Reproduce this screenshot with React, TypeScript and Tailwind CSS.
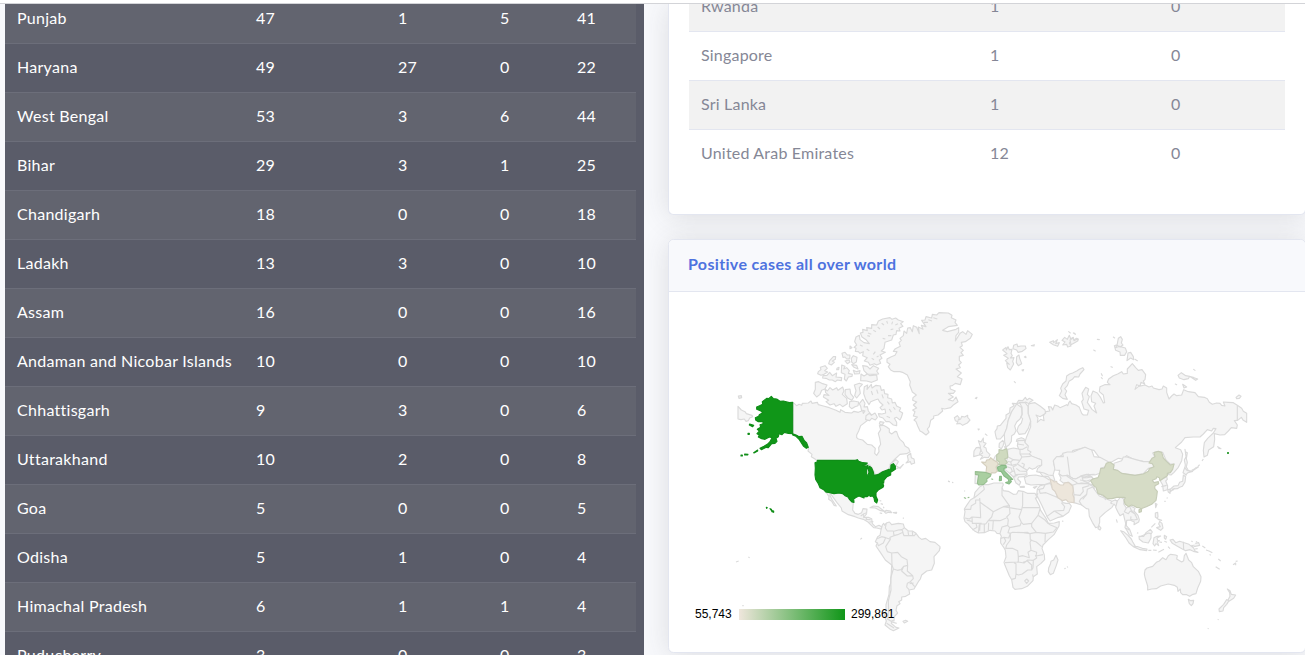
import React from "react";

type StateRow = [string, string, string, string, string];
type CountryRow = [string, string, string];

const states: StateRow[] = [
  ["Punjab", "47", "1", "5", "41"],
  ["Haryana", "49", "27", "0", "22"],
  ["West Bengal", "53", "3", "6", "44"],
  ["Bihar", "29", "3", "1", "25"],
  ["Chandigarh", "18", "0", "0", "18"],
  ["Ladakh", "13", "3", "0", "10"],
  ["Assam", "16", "0", "0", "16"],
  ["Andaman and Nicobar Islands", "10", "0", "0", "10"],
  ["Chhattisgarh", "9", "3", "0", "6"],
  ["Uttarakhand", "10", "2", "0", "8"],
  ["Goa", "5", "0", "0", "5"],
  ["Odisha", "5", "1", "0", "4"],
  ["Himachal Pradesh", "6", "1", "1", "4"],
  ["Puducherry", "3", "0", "0", "3"],
];

const countries: CountryRow[] = [
  ["Rwanda", "1", "0"],
  ["Singapore", "1", "0"],
  ["Sri Lanka", "1", "0"],
  ["United Arab Emirates", "12", "0"],
];

function StatesTable() {
  return (
    <div className="w-[639px] shrink-0 overflow-hidden bg-[#5a5c69] pr-2 text-white">
      <div className="-mt-[10px]">
        {states.map((r, i) => (
          <div
            key={r[0]}
            className={
              "grid h-[49px] grid-cols-[239px_142px_102px_77px_1fr] items-center border-t border-[#6c6e7a] pb-0.5 pl-3 " +
              (i % 2 === 0 ? "bg-[#62646f]" : "")
            }
          >
            {r.map((c, j) => (
              <span key={j} className={j === 0 ? "whitespace-nowrap tracking-[0.28px]" : "tracking-[0.1px]"}>
                {c}
              </span>
            ))}
          </div>
        ))}
      </div>
    </div>
  );
}

function CountriesCard() {
  return (
    <section className="h-[211px] shrink-0 overflow-visible rounded-b-[5.6px] border border-t-0 border-[#e3e6f0] bg-white px-5 text-[#858796] shadow-[0_2px_28px_0_rgba(58,59,69,0.15)]">
      <div className="h-[175px] overflow-hidden">
        <div className="-mt-[22px]">
          {countries.map((r, i) => (
            <div
              key={r[0]}
              className={
                "grid h-[49px] grid-cols-[289px_181px_1fr] items-center border-t border-[#e3e6f0] pb-0.5 pl-3 " +
                (i % 2 === 0 ? "bg-[#f2f2f2]" : "")
              }
            >
              {r.map((c, j) => (
                <span key={j} className={j === 0 ? "whitespace-nowrap tracking-[0.2px]" : "tracking-[0.1px]"}>
                  {c}
                </span>
              ))}
            </div>
          ))}
        </div>
      </div>
    </section>
  );
}

const northAmerica = [
  // Canada
  "M189,292L200,302L207,298L215,301L217,295L235,294L243,288L246,295L262,292L265,299L280,303L298,308L318,316L330,322L332,314L345,322L365,324L372,319L385,322L395,318L392,304L388,296L398,283L405,295L402,306L412,305L415,318L425,330L420,340L405,352L392,362L386,378L380,390L380,398L385,402L398,405L412,418L425,420L436,430L434,445L440,451L447,440L446,428L452,418L449,400L445,385L452,374L448,362L460,361L470,366L478,372L478,382L485,387L496,379L500,380L505,395L510,403L520,412L525,423L536,430L540,440L530,446L510,448L495,462L480,478L498,464L505,470L498,482L510,490L520,478L512,486L497,492L492,480L480,482L476,493L455,500L437,510L432,500L420,480L400,477L380,467L262,467L255,462L244,455L246,448L234,438L236,430L222,410L212,400L200,392L189,388Z",
  // Newfoundland
  "M532,452L542,445L544,458L552,462L554,474L544,478L541,470L528,474L535,466Z",
  // Ellesmere and Axel Heiberg
  "M458,42L480,38L486,43L497,39L505,45L520,50L512,56L519,64L507,70L510,78L500,77L498,88L490,90L485,105L476,108L465,112L462,130L454,138L466,142L450,150L456,160L448,165L452,175L440,180L433,176L420,181L415,172L403,168L412,158L398,152L400,140L390,145L385,140L376,139L378,130L372,127L380,120L374,110L378,96L388,91L390,104L402,113L418,116L408,104L396,96L391,84L399,82L398,73L412,77L410,68L425,70L425,59L440,60L445,48Z",
  "M455,55L462,60M470,48L473,56M488,50L485,58M504,56L496,60M443,66L450,72M430,76L438,80M414,84L424,88M412,92L420,94M490,72L482,74M484,92L474,92M466,102L458,100M410,132L418,137M436,140L430,148M425,160L432,164M440,156L446,153M390,120L398,124",
  "M398,182L412,184L420,192L430,182L446,190L440,198L446,207L430,208L412,207L402,197Z",
  "M393,207L402,213L412,207L420,212L440,210L442,225L425,232L410,228L392,227Z",
  "M370,196L380,200L390,197L388,206L374,207Z",
  // Banks and Victoria
  "M256,232L266,230L278,236L291,240L285,252L275,256L270,268L260,276L251,265L256,253Z",
  "M285,252L292,258L300,248L308,255L320,248L324,256L338,246L342,258L337,268L350,280L352,296L338,305L330,298L318,304L312,296L300,300L288,290L296,286L280,276L282,269L297,271L287,263Z",
  "M346,254L360,252L362,266L371,277L365,286L354,280L345,268Z",
  "M373,240L388,235L397,238L388,248L391,265L380,279L374,272L378,257Z",
  "M359,290L371,288L386,291L384,302L375,305L365,311L358,305Z",
  // Queen Elizabeth islands
  "M265,200L273,194L271,187L285,182L292,190L284,197L293,201L282,208L273,211L263,206Z",
  "M279,212L291,211L299,202L307,212L320,204L318,216L335,218L334,227L322,225L316,230L307,225L298,225L288,220L278,219Z",
  "M299,167L310,155L317,155L316,163L307,168L313,172L304,180L296,176Z",
  "M336,145L345,142L352,150L360,150L359,161L350,162L345,156L339,157Z",
  "M364,160L370,152L381,157L379,171L370,176L365,171Z",
  "M335,180L345,184L341,192L350,188L358,197L355,205L367,208L366,214L355,216L349,228L343,222L345,208L334,203Z",
  "M321,190L327,187L326,194L320,194ZM345,168L357,165L360,171L352,176ZM360,123L366,128L360,131ZM365,179L380,181L384,192L372,187Z",
  // Baffin
  "M403,245L413,240L411,253L424,238L426,249L438,241L451,243L454,256L462,254L464,266L474,268L473,278L485,282L487,294L495,292L500,303L512,309L508,318L518,324L514,337L510,345L500,337L493,340L500,352L500,362L490,360L478,350L468,350L459,339L448,335L445,326L456,327L467,324L465,312L456,315L450,308L459,300L449,291L444,282L435,285L422,290L417,299L407,283L401,266Z",
  "M424,258L428,270M440,254L444,266M456,268L460,280M472,290L478,298M490,306L496,314M478,312L484,322M470,334L480,338",
  "M408,332L418,325L424,331L435,324L442,337L436,345L425,340L419,347L407,344ZM450,350L462,352L456,360L448,357ZM398,316L405,318L400,325Z",
  // Chukotka across the date line
  "M24,304L34,315L45,320L49,326L66,331L68,335L59,339L55,347L48,349L43,342L33,344L24,342Z",
  "M25,273L34,272L35,278L27,280Z",
];

const alaska = [
  "M188,292L178,293L160,288L150,289L140,282L130,281L124,274L116,281L110,280L97,290L98,298L89,302L80,306L80,313L91,317L98,323L88,329L86,334L76,338L77,345L85,350L99,350L99,356L90,359L92,367L82,373L88,378L81,386L88,390L85,396L95,401L105,403L118,396L126,398L120,410L112,418L102,424L90,430L94,434L109,427L115,428L125,416L135,415L141,409L138,400L145,395L147,386L156,389L163,382L175,385L188,386L200,391L207,395L216,394L223,407L230,414L235,427L229,430L220,423L208,404L198,394L188,390Z",
  "M71,443L83,435L83,438L72,444ZM44,447L54,448L53,450L44,450ZM33,450L37,450L37,453L33,453ZM59,357L71,361L68,365L58,360ZM54,385L58,385L58,388L54,388Z",
];

const northAtlantic = [
  // Greenland
  "M0,100L10,92L12,78L20,85L23,69L31,68L37,80L40,62L50,67L58,86L55,66L69,73L64,61L78,65L65,46L75,45L78,35L95,39L97,28L110,30L117,23L145,24L156,31L154,38L168,45L165,52L172,61L145,65L128,76L142,80L168,73L176,68L176,82L168,92L166,108L180,85L188,80L198,88L203,77L217,88L211,100L196,110L184,112L187,122L180,127L190,136L183,143L190,151L178,154L178,166L184,173L176,180L181,188L168,192L184,204L172,215L186,222L181,239L166,235L157,242L150,243L151,252L166,258L160,265L145,265L160,276L145,284L159,288L168,276L174,290L161,299L152,308L134,312L125,310L128,318L114,330L101,333L101,340L92,346L88,365L82,372L87,382L78,390L66,381L60,378L53,363L48,350L42,345L52,336L40,333L45,320L38,315L50,309L40,300L50,291L38,286L39,278L49,270L37,261L29,240L31,230L22,210L10,203L0,200L-18,200L-28,195L-35,185L-30,178L-39,172L-39,162L-26,155L-15,151L-9,140L-20,139L-14,131L1,124L-3,113L4,106Z",
  "M85,44L96,48M100,38L112,42M72,52L84,52",
  // Iceland
  "M163,338L172,332L178,339L174,346L182,342L185,334L194,336L203,331L203,337L210,345L202,354L188,361L180,355L170,357L174,350L166,347Z",
  // Svalbard
  "M308,135L318,127L319,135L324,125L328,134L336,133L333,145L337,152L331,159L342,158L338,169L341,177L331,195L323,188L320,174L328,178L316,167L325,160L311,151L321,146Z",
  "M341,121L351,117L353,125L363,123L376,123L378,131L367,139L354,142L350,135L339,131Z",
  "M350,155L357,150L359,160L365,176L355,182L349,173ZM373,156L377,154L378,158ZM394,122L403,119L402,123ZM366,195L371,194L369,198ZM343,230L346,233ZM226,280L231,277L229,281ZM234,372L238,372L236,375Z",
  // Franz Josef Land
  "M449,112L460,107L461,113L472,104L467,116L478,113L473,124L460,119ZM486,106L494,97L502,103L508,91L512,101L520,97L519,106L530,100L535,103L522,112L513,108L508,114L513,123L503,126L500,118L488,120L495,111ZM506,80L511,84ZM522,84L526,88Z",
  // Novaya Zemlya
  "M478,272L485,258L482,250L488,237L498,228L500,213L509,207L518,204L530,198L538,193L548,188L552,194L540,207L536,216L524,215L517,223L507,229L502,242L494,251L500,258L495,269L502,283L488,280Z",
  // Britain and Ireland
  "M235,407L243,411L250,399L250,412L258,415L251,425L258,429L260,439L270,449L265,458L253,457L241,463L248,453L239,449L248,444L242,435L241,424Z",
  "M222,438L229,428L238,427L243,434L238,450L221,455ZM256,387L261,391Z",
];

const scandinavia = [
  "M285,380L291,371L292,363L301,361L310,350L318,340L318,330L329,323L330,309L342,302L337,295L350,296L356,286L368,287L376,277L381,285L388,280L399,286L390,291L387,296L377,291L370,298L358,293L350,299L344,311L335,320L325,345L320,370L315,386L307,395L301,402L290,402L287,391Z",
  "M313,386L320,370L325,345L335,320L350,297L365,308L366,328L360,342L350,351L344,363L348,377L343,387L335,392L334,409L327,420L318,426L314,411Z",
  "M358,293L375,292L384,304L384,325L392,348L385,370L375,386L357,388L351,377L355,364L364,354L368,341L363,337L367,328L366,306Z",
  "M298,415L308,406L312,412L309,423L304,431L297,427ZM314,425L320,426L316,433Z",
];

const russia = [
  "M-122,296L-105,293L-90,303L-75,315L-73,325L-90,335L-102,330L-96,340L-98,352L-88,343L-78,347L-80,333L-72,320L-61,318L-65,305L-56,306L-52,315L-46,300L-35,304L-30,308L-10,299L-7,302L-3,292L0,288L5,296L18,300L28,307L35,325L40,330L52,330L56,316L42,312L35,290L40,283L36,265L47,247L56,252L52,268L58,275L52,292L66,313L80,324L72,303L77,295L65,290L63,273L69,258L82,264L92,278L100,294L104,293L100,270L88,260L90,245L104,239L120,239L112,232L116,222L130,212L143,207L155,200L160,207L172,205L172,192L187,176L197,188L205,196L216,194L227,209L225,224L220,228L224,237L213,232L210,243L200,239L195,253L206,244L225,240L237,246L246,243L250,249L267,254L276,252L280,243L290,249L290,262L297,282L305,273L312,267L320,272L335,270L341,254L355,260L375,263L385,275L403,277L412,281L418,292L427,298L440,294L450,295L455,301L465,303L460,291L475,292L490,293L502,301L515,310L520,319L530,325L530,352L520,346L514,337L503,346L493,347L502,360L500,370L484,368L475,378L464,389L450,390L433,386L434,403L431,425L416,435L412,451L402,456L400,436L403,413L413,400L430,384L438,371L430,370L425,378L412,374L400,387L390,396L370,396L345,398L335,411L316,428L332,434L338,448L335,467L325,487L312,502L303,510L292,508L303,493L312,477L300,477L288,465L278,442L258,440L248,444L255,457L238,470L220,469L195,465L170,452L160,462L145,460L130,468L118,475L90,461L72,436L58,434L45,427L27,432L8,437L5,451L-15,445L-40,460L-50,470L-45,490L-52,514L-65,513L-84,504L-100,500L-97,490L-85,480L-90,463L-115,455L-128,440L-138,420L-130,395L-118,365L-118,350L-125,325L-125,300Z",
  // Severnaya Zemlya
  "M145,100L152,95L157,103L154,114L159,120L150,126L141,121ZM133,122L141,119L137,128L148,124L166,129L170,140L164,151L151,151L150,141L137,136ZM174,144L182,142L190,155L191,164L182,159L171,167ZM195,163L202,167ZM130,96L134,99ZM82,103L88,104ZM71,135L76,138ZM94,206L97,212ZM94,218L97,221ZM123,185L127,187Z",
  // New Siberian Islands
  "M324,211L334,203L347,212L359,214L355,221L342,224L328,219ZM361,215L372,218L383,222L377,226ZM338,238L350,246L342,249ZM316,237L320,239ZM371,193L375,196ZM498,277L507,270L513,274L508,280L500,281Z",
  "M0,105L9,99L12,107L23,101L24,107L14,113L3,119ZM10,84L15,86ZM443,425L447,430L453,431Z",
  // Sakhalin and the Kurils
  "M345,433L346,440L352,443L349,461L352,472L349,486L356,498L347,498L348,511L342,501L346,480L343,465L348,455ZM384,484L388,480ZM374,491L379,487ZM366,496L371,493ZM396,468L400,462",
];

const latinAmerica = [
  "M288,126L300,128L335,130L350,138L358,148L370,157L368,180L375,190L385,193L395,188L399,176L411,177L410,188L401,192L401,202L415,202L425,206L427,221L436,230L447,226L457,232L452,237L440,234L431,233L414,216L400,208L385,204L375,200L355,194L336,183L334,174L321,158L303,133L299,135L307,150L319,168L312,166L305,154L296,148L297,140Z",
  "M457,225L461,220L464,226L469,219L478,216L485,224L505,220L520,222L523,233L535,243L547,243L558,250L567,262L575,268L587,265L600,275L615,277L630,290L628,302L612,320L613,340L605,360L590,363L575,375L571,387L565,395L552,417L537,420L539,432L527,439L515,441L515,450L506,455L510,461L501,467L498,481L503,489L493,500L492,513L486,512L484,520L498,532L507,534L490,542L481,538L465,525L469,513L463,497L468,481L468,464L477,433L478,410L482,400L485,345L466,330L453,310L438,288L442,279L436,275L443,260L450,256L453,240Z",
  // Caribbean
  "M420,173L430,168L445,170L458,180L464,184L449,181L436,174ZM464,187L468,181L481,183L485,188L475,187L468,190ZM450,189L455,190ZM490,188L500,187L499,190ZM449,152L454,153M452,161L459,163M460,170L462,175M519,203L521,206M519,514L527,511L533,514L523,519Z",
  "M18,336L26,333M55,321L59,323M37,467L41,467M391,268L396,264M654,93L659,95",
];

const latinBorders =
  "M392,198L401,192M401,202L411,190M410,203L408,208L422,209M418,216L430,215M469,219L466,234L472,243L490,243L492,257L480,262L481,268L467,263L455,260L441,266M492,244L505,240L516,239L524,233M516,239L519,247L503,254L492,257M534,244L536,257L522,257L518,247M547,244L548,256L536,257M558,251L553,257L548,256M467,263L460,279L445,287L442,278M481,268L467,290L472,305L485,309L486,345L490,357L482,384L483,420L475,453L476,485L473,508L486,515M485,309L503,307L514,320L531,329L533,346L521,349L513,359L502,361L490,357M533,346L532,363L548,377L550,386L541,395L532,400L530,411L537,419M521,349L515,363L532,378L548,377M541,395L554,410M500,520L486,516M551,399L539,401M470,520L492,534M468,490L474,500";

const usa = [
  "M255,38L262,35L262,31L376,31L382,29L386,34L398,38L412,39L406,45L397,46L408,49L414,46L410,59L410,73L414,77L417,66L413,53L419,49L425,54L430,66L432,76L444,74L458,65L474,59L482,57L483,45L490,41L496,48L496,58L482,67L482,75L471,80L462,90L461,99L457,97L461,107L459,112L446,119L438,128L438,139L443,150L440,159L434,154L432,144L428,138L421,139L417,136L411,140L402,139L402,144L387,138L379,142L371,147L372,157L366,156L359,149L354,141L345,137L338,131L327,129L312,131L299,128L287,126L281,119L270,113L265,101L257,88L255,75L256,55Z",
  "M109,172L112,173L110,175ZM120,176L124,178L126,182L131,183L131,187L126,185L124,181Z",
];

const africaAndMiddleEast = [
  "M120,140L130,134L145,134L162,129L188,129L190,135L186,142L190,152L205,154L220,163L230,162L235,152L252,155L262,160L285,160L292,173L286,174L298,197L302,211L318,235L325,250L343,249L358,245L357,258L342,284L325,299L309,315L306,325L313,345L314,359L303,370L290,380L292,402L280,410L279,422L262,439L245,446L225,448L219,442L215,419L208,407L195,376L192,367L198,351L196,331L191,322L182,309L182,297L184,289L180,281L171,280L165,273L150,271L133,278L115,279L105,274L93,263L85,253L75,245L72,234L75,215L73,207L80,196L91,180L102,173L105,157Z",
  "M348,346L354,360L349,376L340,400L331,404L325,395L326,384L331,373L333,364L341,360Z",
  // Arabia
  "M290,165L292,147L300,137L331,130L336,143L345,154L352,165L349,171L362,178L369,188L378,190L388,190L394,198L386,217L369,229L352,233L330,243L323,233L305,195Z",
  // Turkey and the Caucasus
  "M253,113L265,107L287,105L305,109L325,108L338,114L330,128L316,133L294,134L273,135L258,131Z",
  "M299,96L312,99L325,105L340,107L345,123L333,120L325,110L308,108Z",
  // Central Asia
  "M340,62L350,50L370,50L368,40L382,36L400,36L415,29L435,22L455,30L462,50L480,52L505,65L500,80L482,84L483,98L465,105L440,103L426,107L407,117L398,115L382,106L367,109L357,102L359,91L345,90Z",
  "M357,102L367,108L382,106L398,115L407,117L426,107L455,110L460,118L447,125L445,133L425,130L398,136L385,127L370,129L360,121L363,115Z",
  "M398,136L410,131L425,130L445,131L463,136L460,149L442,164L444,185L428,196L402,188L402,164Z",
  // Islands in the Atlantic and Indian oceans
  "M24,124L30,125M36,127L40,128M73,152L75,154M366,243L370,244M373,386L377,385M381,382L384,380M0,324L2,325",
];

const africaBorders =
  "M130,136L133,148L115,164L102,174M119,174L120,187L160,215L190,200L208,197L186,166L186,143M119,180L107,180L107,190L94,197L92,208L75,208M120,187L122,233L96,231L88,237L75,234M190,200L245,209L248,195L248,157M208,197L210,221L200,231L205,239M160,215L155,231L145,242L160,241L180,242L199,234M248,203L300,203M245,209L237,231L244,247L250,253L275,250L283,240L294,226L300,207M294,226L315,240L324,250M205,239L203,256L186,261L180,280M203,256L209,263L228,259L240,257L244,247M209,263L204,278L211,280L218,277L250,278L262,277L270,281L289,277L275,260L275,250M289,277L316,280L340,276L351,263L330,254L324,250M316,280L315,306M270,281L271,300L289,306L305,320M250,278L270,281M182,295L192,292L206,294L211,280M192,292L197,303L190,314M211,280L211,300L200,315L197,325L217,325L233,332L235,350L249,347L268,353L264,337L273,331L270,306M270,306L276,299M273,331L290,337L288,348L309,344M235,350L235,366L195,368M235,366L252,369L263,360L280,361L290,354L286,345M249,367L262,363L275,375L275,390L263,390L247,402L235,405L228,402L228,371L222,368M228,402L226,415L215,418M280,361L279,384L275,390M254,423L260,417L266,423L260,430ZM278,403L279,410M145,242L137,252L120,252L119,272M118,253L115,279M133,252L133,276M146,248L145,272M96,231L97,250L108,250L111,262L97,270M108,250L125,250M160,241L158,269M80,240L95,244M320,230L343,213L369,229M343,213L371,211L374,200L364,188M300,160L318,158L349,171M300,160L298,148L310,145L316,133M292,149L298,148M382,50L390,110M380,108L412,129M426,107L429,122L445,129M402,164L420,166L430,154L428,143L448,137M444,102L465,120M305,108L315,112M315,112L328,120M290,166L294,160";

const europe = [
  "M106,103L116,105L114,119L116,132L105,130Z",
  "M160,60L166,48L172,44L174,55L169,66Z",
  "M172,75L180,73L198,70L203,50L203,28L220,24L236,27L232,17L234,6L229,4L231,-2L244,-7L252,-4L255,8L265,18L263,30L273,36L268,42L275,48L305,60L305,75L292,79L287,84L277,88L268,83L260,93L261,104L252,110L236,111L233,117L242,126L238,136L228,129L220,111L208,99L194,88L186,84L172,83Z",
  "M240,140L253,139L253,142L241,142ZM280,142L291,139L284,145Z",
];

const europeBorders =
  "M203,50L220,59L240,61L246,51L240,42L240,28M240,42L268,42M232,12L252,15M232,2L254,1M236,28L248,28L262,20M240,61L232,72L250,84L262,91M232,72L215,76L199,71M215,76L212,66L220,59M199,80L213,84L217,94L223,93L219,80L230,76M223,93L226,104L258,102M217,94L210,99M226,104L224,113M203,64L212,66M229,85L239,93L260,94M246,51L272,49M250,84L253,73L245,69M219,109L233,106";

const asiaPacific = [
  // India
  "M5,195L-2,184L2,177L20,163L22,148L38,141L48,155L58,168L78,176L96,184L105,180L113,183L108,200L102,192L96,202L75,218L59,233L59,247L55,260L47,263L37,247L28,229L26,207L19,206ZM57,257L63,264L60,270L54,266Z",
  // Mongolia
  "M102,70L125,62L130,51L140,51L165,58L190,65L208,65L222,72L221,81L205,85L190,101L165,106L125,100L100,88Z",
  // Mainland Southeast Asia
  "M112,183L122,171L132,178L131,192L139,204L151,197L165,205L162,213L174,226L178,239L176,246L162,254L163,246L150,240L140,241L139,257L149,268L157,289L148,285L140,270L135,263L137,250L133,234L130,221L120,227L114,217L107,202Z",
  "M122,272L131,275L144,286L154,297L158,305L166,319L159,319L147,309L138,294ZM160,320L174,320L187,325L201,327L200,332L180,329ZM205,331L214,331M219,330L230,331M235,337L252,328M264,320L270,326",
  "M177,289L191,289L198,278L211,268L217,276L213,282L213,294L205,309L189,306L178,298Z",
  "M222,293L231,289L242,288L231,294L233,301L238,302L232,305L236,317L228,311L224,318L219,311ZM253,286L260,290L257,298L253,294ZM253,304L261,307M238,306L246,307",
  "M270,300L279,298L287,308L299,304L327,313L341,324L345,333L354,337L340,334L330,329L317,332L307,327L291,318L277,310ZM346,310L356,308L359,316L345,319L334,316M367,318L376,324M378,330L387,333L397,338",
  "M226,219L233,217L234,230L232,236L245,241L236,239L226,231ZM239,244L246,250L249,264L242,271L230,263L241,260L236,252ZM214,262L226,250M226,190L231,193L227,203ZM109,238L112,248",
  // Korea and Japan
  "M240,121L252,115L260,110L262,118L257,123L263,138L262,149L250,153L248,135Z",
  "M309,98L314,83L321,91L338,94L324,98L318,104ZM310,105L317,110L315,126L307,139L299,142L292,146L280,147L270,156L270,148L282,138L294,137L299,127L308,124ZM263,149L271,147L270,160L265,156ZM276,148L284,146L278,151M260,173L263,175M253,184L257,184M338,92L356,80",
  // Australia and New Zealand
  "M195,390L201,384L218,379L229,367L238,363L248,353L258,359L265,347L272,343L287,345L292,347L290,357L305,366L311,362L313,347L318,340L326,360L335,368L340,380L355,394L363,410L362,424L353,444L348,461L339,463L329,469L320,464L308,464L302,458L301,447L294,454L292,442L283,436L265,432L242,438L229,446L215,447L203,450L203,438L195,412L193,402ZM325,478L332,482L341,481L339,491L334,497L328,491Z",
  "M442,447L450,452L454,463L467,465L461,475L447,484L444,480L450,469L449,458ZM440,479L447,482L440,493L431,503L429,513L418,515L417,507L431,493ZM413,538L416,539M383,565L386,566M407,380L419,388M415,357L422,363M459,374L467,369L467,376M467,364L473,363M389,343L392,346M334,303L338,305M348,304L352,307M345,327L353,326M171,278L175,280",
];

const asiaBorders =
  "M310,305L311,330M20,163L8,178M52,158L78,174L75,180M96,184L92,189L98,192M105,180L113,183M139,204L133,215L145,221L151,213L165,222L172,238L162,240L152,238L153,229M165,222L166,227M148,199L155,212L165,222M180,290L205,279L213,281M138,265L149,270M244,140L260,136M0,120L20,123L32,119M0,108L14,112L31,104L44,103M5,114L22,113L33,111M0,130L22,130L36,138M37,138L45,146";

const china = [
  "M90,66L102,75L100,88L113,91L125,100L165,106L190,102L205,94L208,86L222,80L217,71L207,69L216,55L225,50L222,38L235,34L245,37L250,54L260,65L271,75L282,72L278,88L271,98L262,100L262,107L250,115L240,122L238,113L231,110L228,116L217,121L222,128L235,125L236,131L225,137L224,145L232,154L230,170L228,181L215,193L199,200L183,206L178,203L169,202L164,199L155,195L145,200L135,192L132,180L136,173L130,172L110,172L96,176L82,176L68,165L54,161L48,142L40,136L32,122L38,117L54,113L59,100L62,86L73,84L79,70Z",
  "M177,209L185,206L184,215L177,217Z",
];

interface RegionProps {
  x: number;
  y: number;
  paths: string[];
  fill?: string;
  stroke?: string;
  borders?: string;
}

function Region({ x, y, paths, fill = "#f5f5f5", stroke = "#dadada", borders }: RegionProps) {
  return (
    <g
      transform={`translate(${x} ${y}) scale(0.33333)`}
      fill={fill}
      stroke={stroke}
      strokeWidth={3.4}
      strokeLinejoin="round"
    >
      {paths.map((d, i) => (
        <path key={i} d={d} />
      ))}
      {borders && <path d={borders} fill="none" />}
    </g>
  );
}

function WorldMap() {
  return (
    <svg viewBox="689 312 596 320" className="block h-[320px] w-[596px] overflow-visible">
      <defs>
        <linearGradient id="cases-scale">
          <stop offset="0" stopColor="#efe6dc" />
          <stop offset="1" stopColor="#109618" />
        </linearGradient>
      </defs>
      <Region x={730} y={305} paths={northAmerica} />
      <Region x={900} y={305} paths={northAtlantic} />
      <Region x={1070} y={305} paths={russia} borders="M502,301L502,346" />
      <Region x={900} y={305} paths={scandinavia} />
      <Region x={730} y={450} paths={latinAmerica} borders={latinBorders} />
      <Region x={940} y={440} paths={africaAndMiddleEast} borders={africaBorders} />
      <Region x={940} y={440} paths={europe} borders={europeBorders} />
      <Region x={1080} y={440} paths={asiaPacific} borders={asiaBorders} />
      <Region x={1080} y={440} paths={china} fill="#d6dcc6" stroke="#c6ccb7" />
      <Region
        x={940}
        y={440}
        fill="#ede6db"
        stroke="#dbd4ca"
        paths={[
          "M330,118L337,121L343,126L350,124L352,130L361,135L370,135L373,129L385,127L398,138L400,153L398,163L402,174L402,188L385,186L378,179L368,182L354,173L345,154L337,147L335,135Z",
        ]}
      />
      <Region
        x={940}
        y={440}
        fill="#e7e3d4"
        stroke="#d5cfbe"
        paths={["M125,66L137,67L140,60L148,59L152,53L160,60L172,67L174,74L168,81L172,94L165,99L155,98L153,102L138,97L140,80Z"]}
      />
      <Region
        x={940}
        y={440}
        fill="#cfdabf"
        stroke="#bfcbb0"
        paths={["M177,29L188,31L200,26L203,45L203,53L194,57L202,67L196,73L176,74L178,66L170,60L170,45L177,39Z"]}
      />
      <Region
        x={940}
        y={440}
        fill="#aacfa1"
        stroke="#98be91"
        paths={[
          "M106,95L135,97L153,103L151,109L140,117L141,124L131,133L117,135L112,130L116,105L106,103ZM73,173L77,175ZM84,173L87,172ZM155,117L158,118Z",
        ]}
      />
      <Region
        x={940}
        y={440}
        fill="#9ac998"
        stroke="#88ba86"
        paths={[
          "M172,82L185,76L198,77L199,83L192,85L192,92L206,106L218,118L211,118L214,125L207,132L197,128L207,125L204,116L192,108L184,95L175,93ZM179,109L184,109L184,121L178,122Z",
        ]}
      />
      <Region x={730} y={305} paths={alaska} fill="#109618" stroke="#0f8d17" />
      <Region x={730} y={450} paths={usa} fill="#109618" stroke="#0f8d17" />
      <rect x={1227} y={452} width={2} height={2} fill="#3fa544" />
      <rect x={739} y={609} width={106} height={11} fill="url(#cases-scale)" />
      <g className="font-['Liberation_Sans',sans-serif] text-[12px]" fill="#000">
        <text x={695} y={618}>
          55,743
        </text>
        <text x={851} y={618}>
          299,861
        </text>
      </g>
    </svg>
  );
}

function MapCard() {
  return (
    <section className="h-[414px] shrink-0 rounded-[5.6px] border border-[#e3e6f0] bg-white shadow-[0_2px_28px_0_rgba(58,59,69,0.15)]">
      <header className="flex h-[52px] items-center rounded-t-[5px] border-b border-[#e3e6f0] bg-[#f8f9fc] px-5 pb-[3px]">
        <h6 className="-ml-px font-bold tracking-[0.34px] text-[#4e73df]">Positive cases all over world</h6>
      </header>
      <div className="px-5 pt-5">
        <WorldMap />
      </div>
    </section>
  );
}

export default function App() {
  return (
    <div className="flex h-[655px] w-[1305px] flex-col overflow-hidden bg-[#f8f9fc] font-['Lato',sans-serif] text-base leading-6">
      <div className="h-1 shrink-0 border-b border-[#d3d4d8] bg-white" />
      <main className="flex h-[651px] gap-6 overflow-hidden pl-[5px]">
        <StatesTable />
        <div className="flex w-[638px] shrink-0 flex-col gap-6">
          <CountriesCard />
          <MapCard />
        </div>
      </main>
    </div>
  );
}
